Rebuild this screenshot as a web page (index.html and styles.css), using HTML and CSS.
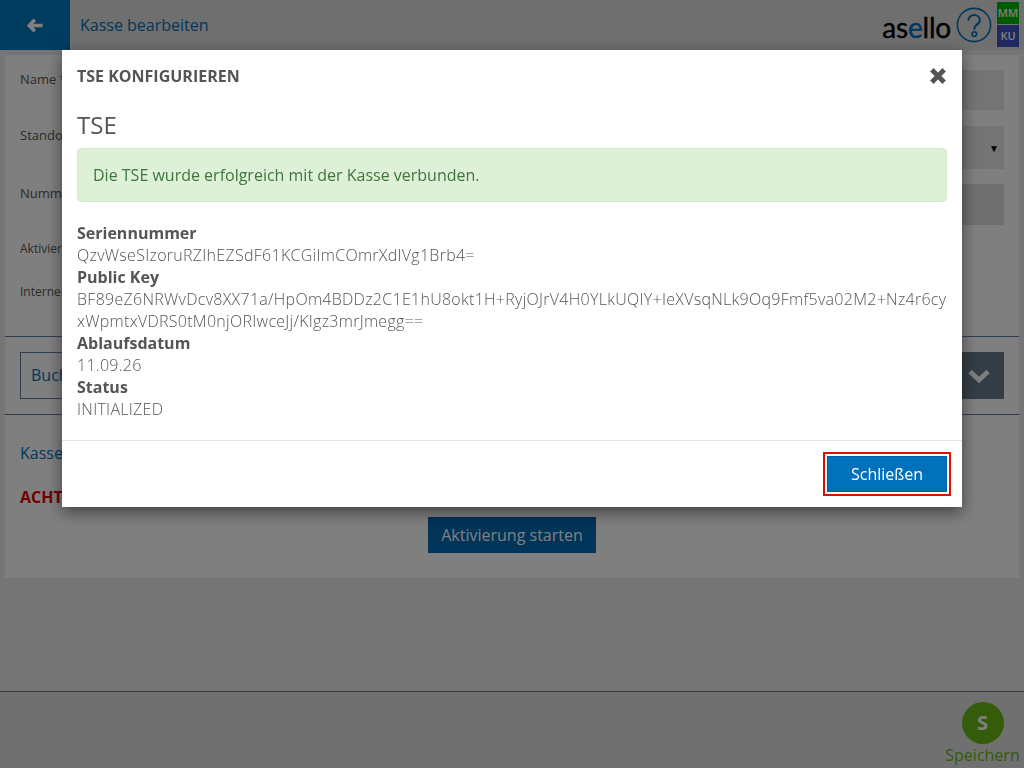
FILE: index.html
```html
<!DOCTYPE html>
<html lang="de">
<head>
<meta charset="utf-8">
<title>Kasse bearbeiten</title>
<link rel="stylesheet" href="styles.css">
</head>
<body>
<div class="app">
  <header class="topbar">
    <a class="back"><svg class="back-icon" viewBox="0 0 16 15"><path d="M7.800 1.800 2.200 7.500l5.600 5.700M3 7.500h12.500" fill="none" stroke="#fff" stroke-width="3.600"/></svg></a>
    <div class="page-title">Kasse bearbeiten</div>
    <div class="brand">
      <span class="logo">as<b>e</b>llo</span>
      <svg class="help" viewBox="0 0 36 36"><circle cx="18" cy="18" r="16.6" fill="none" stroke="#0070bb" stroke-width="1.6"/><path d="M12.500 13.500c0-3.400 2.600-5.500 5.700-5.500 3.200 0 5.600 2.100 5.600 5 0 2.500-1.500 3.700-3.200 4.900-1.600 1.100-2.200 2-2.200 3.800v1" fill="none" stroke="#0070bb" stroke-width="2"/><circle cx="18.300" cy="27" r="2.300" fill="none" stroke="#0070bb" stroke-width="1.600"/></svg>
    </div>
    <div class="users">
      <span class="user user-mm">MM</span>
      <span class="user user-ku">KU</span>
    </div>
  </header>
  <main class="panel">
    <div class="form-row row-name"><label class="lbl">Name <i class="req">*</i></label><div class="field"></div></div>
    <div class="form-row row-ort"><label class="lbl">Standort</label><div class="field field-select"><span class="caret">▼</span></div></div>
    <div class="form-row row-num"><label class="lbl">Nummer</label><div class="field field-dark"></div></div>
    <div class="small-row row-akt">Aktiviert</div>
    <div class="small-row row-int">Interne ID</div>
    <div class="bar">
      <div class="bar-box">Buchungen</div>
      <div class="bar-btn"><svg class="chev" viewBox="0 0 24 16"><path d="M3 3.500 12 12l9-8.500" fill="none" stroke="#fff" stroke-width="4.600"/></svg></div>
    </div>
    <a class="kasse-link">Kassenregistrierung</a>
    <p class="warn">ACHTUNG</p>
    <div class="start-wrap"><button class="start">Aktivierung starten</button></div>
  </main>
  <footer class="footer">
    <div class="save"><span class="save-circle">S</span><span class="save-label">Speichern</span></div>
  </footer>
</div>

<div class="overlay"></div>

<section class="modal">
  <div class="modal-head">
    <h2 class="modal-title">TSE KONFIGURIEREN</h2>
    <svg class="close" viewBox="0 0 18 18"><path d="M2.800 2.800l12.400 12.400M15.200 2.800 2.800 15.200" fill="none" stroke="#555" stroke-width="4.800"/></svg>
  </div>
  <div class="modal-body">
    <h3 class="tse">TSE</h3>
    <div class="alert">Die TSE wurde erfolgreich mit der Kasse verbunden.</div>
    <dl class="info">
      <dt>Seriennummer</dt>
      <dd>QzvWseSIzoruRZIhEZSdF61KCGiImCOmrXdIVg1Brb4=</dd>
      <dt>Public Key</dt>
      <dd>BF89eZ6NRWvDcv8XX71a/HpOm4BDDz2C1E1hU8okt1H+RyjOJrV4H0YLkUQIY+IeXVsqNLk9Oq9Fmf5va02M2+Nz4r6cyxWpmtxVDRS0tM0njORIwceJj/KIgz3mrJmegg==</dd>
      <dt>Ablaufsdatum</dt>
      <dd>11.09.26</dd>
      <dt>Status</dt>
      <dd>INITIALIZED</dd>
    </dl>
  </div>
  <div class="modal-foot">
    <button class="close-btn">Schließen</button>
  </div>
</section>
</body>
</html>
```

FILE: styles.css
```css
* { box-sizing: border-box; }
html, body { margin: 0; padding: 0; height: 768px; overflow: hidden; }
body { font-family: "Open Sans", sans-serif; font-size: 14px; color: #555; background: #eaeaea; }

.app { display: flex; flex-direction: column; height: 768px; }

.topbar { display: flex; align-items: stretch; height: 50px; background: #dedede; flex: none; }
.back { width: 70px; background: #0076c0; display: flex; align-items: center; justify-content: center; }
.back-icon { width: 16px; height: 15px; }
.page-title { margin-left: 10px; line-height: 50px; font-size: 16px; color: #0070bb; flex: 1; }
.brand { display: flex; align-items: center; gap: 5px; margin-right: 5px; padding-bottom: 1px; }
.logo { font-family: Lato, sans-serif; font-size: 28px; font-weight: 400; color: #000; letter-spacing: -.2px; padding-top: 5px; -webkit-text-stroke: .4px #000; }
.logo b { font-weight: 400; color: #0070bb; -webkit-text-stroke: .4px #0070bb; }
.help { width: 36px; height: 36px; }
.users { display: flex; flex-direction: column; gap: 1px; padding-top: 2px; margin-right: 5px; }
.user { width: 22px; height: 22px; font-size: 11px; font-weight: 600; text-align: center; line-height: 22px; color: #fff; }
.user-mm { background: #00b400; }
.user-ku { background: #4050c0; }

.panel { margin: 5px 5px 0; padding: 0 15px; height: 523px; background: #fff; flex: none; display: flex; flex-direction: column; }
.form-row { display: flex; justify-content: space-between; align-items: flex-start; }
.lbl { font-size: 13px; line-height: 19px; }
.req { color: #d00; font-style: normal; }
.field { width: 300px; height: 40px; background: #e8e8e8; }
.row-name { margin-top: 15px; }
.row-ort { margin-top: 16px; }
.field-select { height: 43px; display: flex; align-items: center; justify-content: flex-end; padding-right: 5px; }
.caret { font-size: 10px; color: #000; }
.row-num { margin-top: 15px; }
.field-dark { height: 41px; background: #dedede; }
.small-row { font-size: 12px; line-height: 17px; }
.row-akt { margin-top: 15px; }
.row-int { margin-top: 26px; }
.bar { margin: 36px -15px 0; padding: 15px; border-top: 1px solid #5d7b9c; border-bottom: 1px solid #5d7b9c; display: flex; height: 79px; flex: none; }
.bar-box { flex: 1; border: 1px solid #5d7b9c; font-size: 16px; line-height: 45px; padding-left: 10px; color: #0070bb; }
.bar-btn { width: 50px; background: #687a8c; display: flex; align-items: center; justify-content: center; }
.chev { width: 24px; height: 16px; }
.kasse-link { margin-top: 27px; font-size: 16px; line-height: 22px; color: #0070bb; }
.warn { margin: 22px 0 0; font-size: 16px; font-weight: 700; line-height: 22px; color: #e00000; }
.start-wrap { margin-top: 9px; text-align: center; }
.start { width: 168px; height: 36px; padding: 0; border: 0; background: #0068b0; color: #fff; font-family: inherit; font-size: 16px; }

.footer { margin-top: 113px; flex: 1; border-top: 1px solid #66768a; display: flex; justify-content: flex-end; background: #e0e0e0; }
.save { width: 79px; margin-right: 2px; display: flex; flex-direction: column; align-items: center; padding-top: 10px; }
.save-circle { width: 42px; height: 42px; border-radius: 50%; background: #68b814; color: #fff; font-size: 20px; font-weight: 700; text-align: center; line-height: 42px; }
.save-label { font-size: 16px; line-height: 22px; color: #68b814; }

.overlay { position: fixed; inset: 0; background: rgba(0, 0, 0, .5); }

.modal { position: fixed; left: 62px; top: 50px; width: 900px; height: 457px; background: #fff; box-shadow: 0 5px 15px rgba(0, 0, 0, .5); display: flex; flex-direction: column; }
.modal-head { display: flex; justify-content: space-between; align-items: center; height: 52px; padding: 0 15px; }
.modal-title { margin: 0; font-size: 16px; font-weight: 700; color: #555; }
.close { width: 18px; height: 18px; }
.modal-body { padding: 0 15px; height: 339px; border-bottom: 1px solid #e5e5e5; flex: none; }
.tse { margin: 8px 0 9px; font-size: 24px; font-weight: 400; line-height: 29px; color: #555; }
.alert { height: 54px; padding: 15px; background: #dff0d8; border: 1px solid #d6e9c6; border-radius: 4px; color: #3c763d; font-size: 16px; line-height: 22px; }
.info { margin: 20px 0 0; font-size: 16px; line-height: 22px; }
.info dt { font-weight: 700; }
.info dd { margin: 0; word-break: break-all; font-weight: 300; letter-spacing: .28px; }
.modal-foot { flex: 1; display: flex; justify-content: flex-end; padding: 15px 15px 0; }
.close-btn { width: 120px; height: 36px; border: 1px solid #005f9e; background: #0072bc; color: #fff; font-family: inherit; font-size: 16px; padding: 0; outline: 2px solid #e01000; outline-offset: 2px; }
```
